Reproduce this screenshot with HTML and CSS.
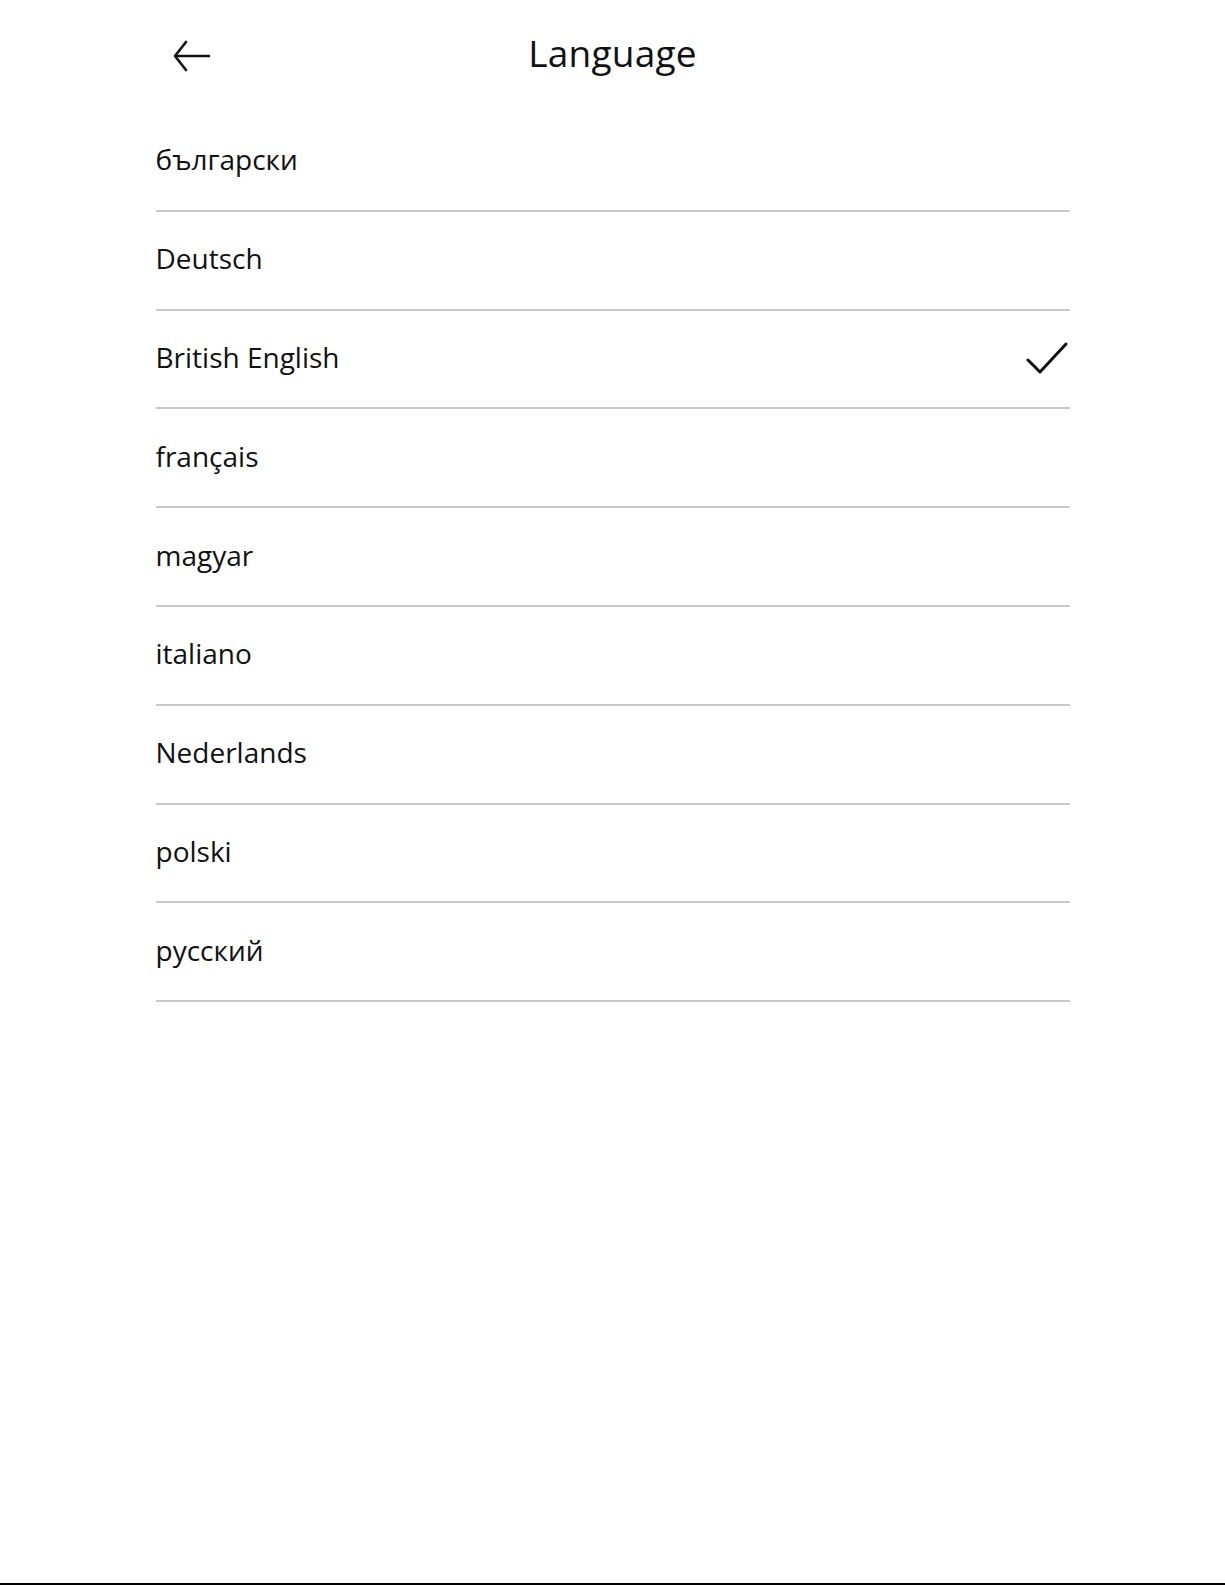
FILE: index.html
```html
<!DOCTYPE html>
<html lang="en">
<head>
	<meta charset="UTF-8">
	<meta name="viewport" content="width=device-width, initial-scale=1.0">
	<title>Language</title>
	<link rel="stylesheet" href="styles.css">
</head>
<body>

	<div class="page">
		<header class="topbar">
			<button class="back" aria-label="Back">
				<svg width="38" height="38" viewBox="0 0 38 38">
					<path d="M37 19 H3 M14 5 L3 19 L14 33" fill="none" stroke="#111" stroke-width="2.6" stroke-linecap="round" stroke-linejoin="round"/>
				</svg>
			</button>
			<h1>Language</h1>
		</header>

		<ul class="languages">
			<li>български</li>
			<li>Deutsch</li>
			<li class="selected">British English
				<svg class="check" width="42" height="34" viewBox="0 0 42 34">
					<path d="M2 19 L14 31 L40 3" fill="none" stroke="#111" stroke-width="3" stroke-linecap="round" stroke-linejoin="round"/>
				</svg>
			</li>
			<li>français</li>
			<li>magyar</li>
			<li>italiano</li>
			<li>Nederlands</li>
			<li>polski</li>
			<li>русский</li>
		</ul>
	</div>

	<div class="bottom-edge"></div>

</body>
</html>
```

FILE: styles.css
```css
html, body {
	margin: 0;
	padding: 0;
	background: #fff;
}
body {
	font-family: "Open Sans", "Noto Sans", sans-serif;
	color: #111;
	height: 1585px;
	display: flex;
	flex-direction: column;
}
.page {
	flex: 1;
	width: 914px;
	margin: 0 auto;
}
.topbar {
	height: 113px;
	display: flex;
	align-items: center;
	justify-content: center;
	position: relative;
}
.topbar h1 {
	margin: 0 0 8px;
	font-size: 37px;
	font-weight: 400;
	letter-spacing: 0.2px;
}
.back {
	position: absolute;
	left: 16px;
	top: 37px;
	padding: 0;
	border: 0;
	background: none;
}
.languages {
	list-style: none;
	margin: 0;
	padding: 0;
}
.languages li {
	height: 92.8px;
	padding-bottom: 4px;
	border-bottom: 2px solid #c9c9c9;
	display: flex;
	align-items: center;
	justify-content: space-between;
	font-size: 28px;
}
.check {
	margin-right: 2px;
	margin-top: 2px;
}
.bottom-edge {
	height: 2px;
	background: #000;
}
```
